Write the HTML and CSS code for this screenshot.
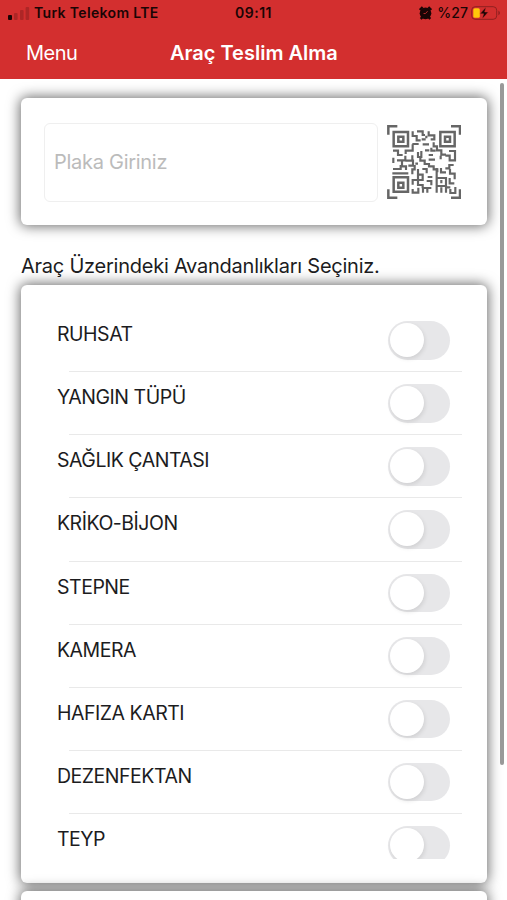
FILE: index.html
```html
<!DOCTYPE html>
<html lang="tr">
<head>
<meta charset="utf-8">
<title>Araç Teslim Alma</title>
<link rel="stylesheet" href="styles.css">
</head>
<body>
<header class="header">
  <div class="status">
    <div class="carrier">
      <svg class="signal" viewBox="0 0 22 14" aria-hidden="true"><rect x="0" y="9" width="4" height="5" rx="1"/><g opacity=".2"><rect x="6" y="7" width="3.6" height="7" rx="1"/><rect x="12" y="4" width="3.6" height="10" rx="1"/><rect x="17.6" y="1" width="3.6" height="13" rx="1"/></g></svg>
      <span class="carrier-name">Turk Telekom LTE</span>
    </div>
    <span class="time">09:11</span>
    <div class="power">
      <svg class="alarm" viewBox="0 0 12 13" aria-hidden="true"><circle cx="6" cy="6.8" r="5.4"/><path d="M.7 3.7 3.4 1M11.3 3.7 8.6 1M1.5 12 3 10.5M10.5 12 9 10.5" stroke="#1a0505" stroke-width="2.2"/><path d="M6 7 8 4.800M6 7H4.200" stroke="#b82c2b" stroke-width=".9" fill="none"/></svg>
      <span class="percent">%27</span>
      <svg class="battery" viewBox="0 0 30 14" aria-hidden="true"><rect x=".7" y=".7" width="25" height="12.6" rx="3.5" fill="none" stroke="#8f2020" stroke-width="1"/><path d="M27.4 4.800c2 .7 2 3.700 0 4.400z" fill="#8f2020"/><rect x="2.3" y="2.2" width="6.5" height="9.6" rx="1.5" fill="#ffc90a"/><path d="M15 1 9 7.800H12.600L11.200 13 17.300 6H13.700Z" stroke="#d32f2f" stroke-width=".5"/></svg>
    </div>
  </div>
  <nav class="nav"><a class="menu">Menu</a><h1 class="title">Araç Teslim Alma</h1></nav>
</header>
<main class="content">
  <section class="card search">
    <input class="plate" placeholder="Plaka Giriniz" aria-label="Plaka">
    <svg class="qr" viewBox="20 15 222 222" fill="none" stroke="#666" stroke-width="7.5" aria-hidden="true">
      <path d="M24 44V19H51M212 19H239V44M24 208V233H51M212 233H239V208"/>
      <path d="M40 36H83V79H40ZM180 36H223V79H180ZM40 172H83V215H40Z"/>
      <path d="M54 50H69V65H54ZM194 50H209V65H194ZM54 188H69V203H54Z"/>
      <path stroke-width="6.5" d="M97 34V48H109V61H121M110 34H127V45H134M145 34V46H162V58H151M124 58H136M138 47V55M96 72H115M127 73H146M160 67V79H170V91H183V104H197M97 73V92H76V102M38 92H53V105H67M123 93V111H113V96M134 91H147M153 83V92H166M206 93H224V121H208V107H195M181 107V118M145 105H158M39 113V129M50 121H63M75 107V121H65V139H77V150M75 122H98V137H84M96 106V121M120 112V122H133V132H146V139H160V148H171V157M145 119H164M105 131H113M103 135V148H96V163M36 160H84M38 147H61V135M113 147V164H127V180H113V195H127V205M113 164V180H97V194M126 147H139V160M142 171H156M139 183H153V196M97 207V218H114V203M128 218V204H153M141 218V202M169 144V218M169 174H197V198H169M183 180V190M183 218V202M197 218V202H210M182 144V157H197M195 145H207V135H220M209 147V161H223V178M208 174V190H222M225 201V219H210V207"/>
    </svg>
  </section>
  <h2 class="caption">Araç Üzerindeki Avandanlıkları Seçiniz.</h2>
  <section class="card list-card">
    <ul class="list">
      <li class="row"><span class="label">RUHSAT</span><span class="switch"></span></li>
      <li class="row"><span class="label">YANGIN TÜPÜ</span><span class="switch"></span></li>
      <li class="row"><span class="label">SAĞLIK ÇANTASI</span><span class="switch"></span></li>
      <li class="row"><span class="label">KRİKO-BİJON</span><span class="switch"></span></li>
      <li class="row"><span class="label">STEPNE</span><span class="switch"></span></li>
      <li class="row"><span class="label">KAMERA</span><span class="switch"></span></li>
      <li class="row"><span class="label">HAFIZA KARTI</span><span class="switch"></span></li>
      <li class="row"><span class="label">DEZENFEKTAN</span><span class="switch"></span></li>
      <li class="row"><span class="label">TEYP</span><span class="switch"></span></li>
    </ul>
  </section>
  <section class="card next-card"></section>
  <div class="scrollbar"></div>
</main>
</body>
</html>
```
FILE: styles.css
```css
* { box-sizing: border-box; }
body {
  margin: 0;
  height: 900px;
  overflow: hidden;
  display: flex;
  flex-direction: column;
  background: #fff;
  color: #1c1c1e;
  font-family: Inter, "Liberation Sans", sans-serif;
}
.header { flex: none; height: 79px; background: #d32f2f; }
.status {
  height: 26px;
  padding: 0 6px 0 8px;
  display: grid;
  grid-template-columns: 1fr auto 1fr;
  align-items: center;
  color: #1a0505;
  font-size: 14px;
  font-weight: 600;
  line-height: 26px;
}
.status svg { fill: #1a0505; }
.carrier { display: flex; align-items: center; gap: 4px; }
.signal { width: 22px; height: 14px; }
.carrier-name { letter-spacing: 0.35px; }
.time { padding-right: 2px; letter-spacing: 0.5px; }
.power { display: flex; align-items: center; justify-content: flex-end; }
.alarm { width: 13px; height: 14px; margin-right: 5px; }
.percent { font-weight: 500; letter-spacing: 0.1px; }
.battery { width: 30px; height: 14px; margin-left: 3px; }
.nav {
  height: 53px;
  padding-left: 26px;
  display: grid;
  grid-template-columns: 144px auto;
  align-items: center;
  justify-content: start;
  color: #fff;
}
.menu { font-size: 20px; letter-spacing: -0.5px; }
.title { margin: 0; font-size: 20px; font-weight: 600; }
.content { position: relative; flex: 1; padding: 19px 20px 0 21px; }
.card {
  background: #fff;
  border-radius: 6px;
  box-shadow: 0 0 13px 1px rgba(0, 0, 0, 0.6);
}
.search { height: 127px; padding: 25px 26px 0 23px; display: flex; gap: 9px; }
.plate {
  flex: 1;
  min-width: 0;
  height: 79px;
  padding: 0 9px 2px;
  border: 1px solid #efefef;
  border-radius: 6px;
  background: #fff;
  font: 20px Inter, "Liberation Sans", sans-serif;
  letter-spacing: -0.28px;
}
.plate::placeholder { color: #bbb; opacity: 1; }
.qr { flex: none; width: 74px; height: 74px; margin-top: 2px; }
.caption {
  height: 60px;
  margin: 0;
  padding-top: 29px;
  font-size: 20px;
  font-weight: 400;
  line-height: 24px;
  letter-spacing: -0.24px;
  white-space: nowrap;
}
.list-card { height: 598px; padding: 24px 25px 24px 36px; }
.list { height: 550px; margin: 0; padding: 0; overflow: hidden; list-style: none; }
.row {
  height: 63.15px;
  padding: 12px 12px 0 0;
  display: flex;
  justify-content: space-between;
  background: linear-gradient(#e9e9e9, #e9e9e9) 12px 100% / 100% 1px no-repeat;
}
.label { font-size: 19.5px; line-height: 26px; letter-spacing: -0.48px; }
.switch { width: 62px; height: 38.5px; padding: 2px; border-radius: 20px; background: #e7e7e9; }
.switch::before {
  content: "";
  display: block;
  width: 34px;
  height: 34px;
  border-radius: 50%;
  background: #fff;
  box-shadow: 1px 2px 4px rgba(0, 0, 0, 0.1);
}
.next-card { height: 40px; margin-top: 8px; }
.scrollbar {
  position: absolute;
  top: 4px;
  right: 3px;
  width: 4px;
  height: 682px;
  border-radius: 2px;
  background: #999;
}
```
